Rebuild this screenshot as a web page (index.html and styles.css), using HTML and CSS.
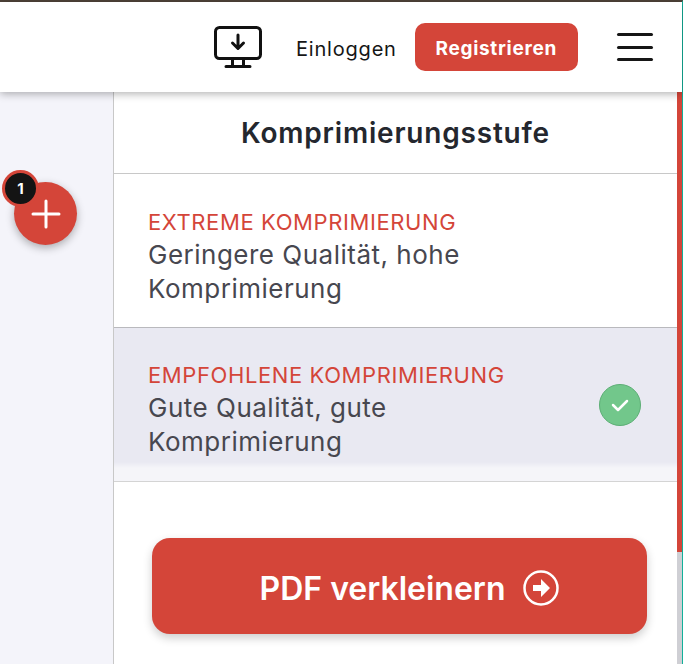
FILE: index.html
```html
<!DOCTYPE html>
<html lang="de">
<head>
  <meta name="viewport" content="width=device-width, initial-scale=1">
  <title>PDF verkleinern</title>
  <link rel="stylesheet" href="styles.css">
</head>
<body>
  <div class="window">
    <header class="topbar">
      <svg class="desktop-icon" width="48" height="42" viewBox="0 0 48 42" fill="none" stroke="#111" stroke-width="3" stroke-linecap="round" stroke-linejoin="round">
        <rect x="1.5" y="1.500" width="45" height="31" rx="4"/>
        <path d="M24 9v13M18.500 17l5.500 5.500 5.500-5.500"/>
        <path d="M18.500 33v7M29.500 33v7M12 40.500h24"/>
      </svg>
      <a class="login">Einloggen</a>
      <a class="register">Registrieren</a>
      <div class="burger"><span></span><span></span><span></span></div>
    </header>
    <div class="main">
      <aside class="sidebar">
        <div class="add-btn">
          <svg width="30" height="30" viewBox="0 0 30 30" stroke="#fff" stroke-width="3" stroke-linecap="round">
            <path d="M15 2v26M2 15h26"/>
          </svg>
          <span class="count">1</span>
        </div>
      </aside>
      <section class="panel">
        <h2 class="panel-title">Komprimierungsstufe</h2>
        <div class="option">
          <div class="option-text">
            <div class="option-name">EXTREME KOMPRIMIERUNG</div>
            <div class="option-desc">Geringere Qualität, hohe Komprimierung</div>
          </div>
        </div>
        <div class="option selected">
          <div class="option-text">
            <div class="option-name">EMPFOHLENE KOMPRIMIERUNG</div>
            <div class="option-desc">Gute Qualität, gute Komprimierung</div>
          </div>
          <span class="check">
            <svg width="18" height="14" viewBox="0 0 18 14" fill="none" stroke="#fff" stroke-width="2.500" stroke-linecap="round" stroke-linejoin="round">
              <path d="M2 7l5 5 9-9"/>
            </svg>
          </span>
        </div>
        <div class="action">
          <a class="compress-btn">
            PDF verkleinern
            <svg width="36" height="36" viewBox="0 0 36 36">
              <circle cx="18" cy="18" r="16.500" fill="none" stroke="#fff" stroke-width="2.500"/>
              <path d="M10 15h8V9l9 9-9 9v-6h-8z" fill="#fff"/>
            </svg>
          </a>
        </div>
      </section>
      <div class="scrollbar"><div class="scrollbar-thumb"></div></div>
    </div>
  </div>
</body>
</html>
```

FILE: styles.css
```css
html, body {
  margin: 0;
  height: 100%;
  overflow: hidden;
}
body {
  font-family: "Inter", "Noto Sans", sans-serif;
  background: #fff;
  color: #47474f;
}
.window {
  height: 664px;
  display: flex;
  flex-direction: column;
  border-top: 2px solid #4f4339;
  border-right: 1px solid #12b09a;
  box-sizing: border-box;
}
.topbar {
  position: relative;
  z-index: 2;
  height: 90px;
  flex: none;
  display: flex;
  align-items: center;
  background: #fff;
  box-shadow: 0 2px 8px rgba(0,0,0,0.3);
  padding-left: 214px;
}
.login {
  margin-left: 34px;
  padding-top: 4px;
  font-size: 20px;
  letter-spacing: 0.8px;
  color: #161616;
}
.register {
  margin-left: 18px;
  width: 163px;
  height: 48px;
  line-height: 52px;
  text-align: center;
  background: #d44539;
  color: #fff;
  font-size: 19px;
  font-weight: 700;
  letter-spacing: 0.7px;
  border-radius: 10px;
}
.burger {
  margin-left: 39px;
  width: 36px;
  display: flex;
  flex-direction: column;
  gap: 9.500px;
}
.burger span {
  height: 3px;
  border-radius: 2px;
  background: #161616;
}
.main {
  flex: 1;
  display: flex;
  min-height: 0;
}
.sidebar {
  width: 113px;
  flex: none;
  background: #f4f4fa;
  border-right: 1px solid #c8c8c8;
}
.add-btn {
  position: relative;
  width: 63px;
  height: 63px;
  margin: 90px 0 0 14px;
  display: flex;
  align-items: center;
  justify-content: center;
  border-radius: 50%;
  background: #d44539;
  box-shadow: 0 3px 8px rgba(0,0,0,0.3);
}
.count {
  position: absolute;
  left: -12px;
  top: -12px;
  width: 31px;
  height: 31px;
  line-height: 31px;
  text-align: center;
  border-radius: 50%;
  border: 3.500px solid #d44539;
  background: #141414;
  color: #fff;
  font-size: 15px;
  font-weight: 700;
}
.panel {
  flex: 1;
  min-width: 0;
  background: #fff;
}
.panel-title {
  margin: 0;
  padding-top: 2px;
  height: 79px;
  line-height: 79px;
  text-align: center;
  font-size: 28px;
  font-weight: 600;
  letter-spacing: 0.8px;
  color: #24272e;
  border-bottom: 1px solid #c8c8c8;
}
.option {
  height: 154px;
  box-sizing: border-box;
  padding: 34px 36px 0 34px;
  display: flex;
  align-items: flex-start;
  justify-content: space-between;
  border-bottom: 1px solid #b9b9bd;
}
.option-text { width: 370px; }
.option-name {
  font-size: 22px;
  line-height: 28px;
  margin-bottom: 2px;
  letter-spacing: 0.6px;
  color: #d44539;
}
.option-desc {
  font-size: 26px;
  line-height: 33.500px;
  letter-spacing: 0.5px;
  color: #47474f;
}
.selected {
  padding-top: 33px;
  background: linear-gradient(to bottom, #e9e9f2 0, #e9e9f2 134px, #f5f5f9 140px, #f5f5f9 100%);
  border-bottom-color: #d4d4d4;
}
.check {
  margin-top: 23px;
  width: 42px;
  height: 42px;
  display: flex;
  align-items: center;
  justify-content: center;
  border-radius: 50%;
  background: #72c78b;
  border: 1px solid #5cae75;
  box-sizing: border-box;
}
.action {
  padding: 56px 30px 0 38px;
}
.compress-btn {
  height: 96px;
  box-sizing: border-box;
  padding: 4px 0 0 20px;
  display: flex;
  align-items: center;
  justify-content: center;
  gap: 18px;
  background: #d44539;
  color: #fff;
  font-size: 32px;
  font-weight: 600;
  border-radius: 18px;
  box-shadow: 0 4px 10px rgba(0,0,0,0.2);
}
.scrollbar {
  width: 5px;
  flex: none;
  background: #cfcfd4;
}
.scrollbar-thumb {
  height: 460px;
  background: #d44539;
}
```
